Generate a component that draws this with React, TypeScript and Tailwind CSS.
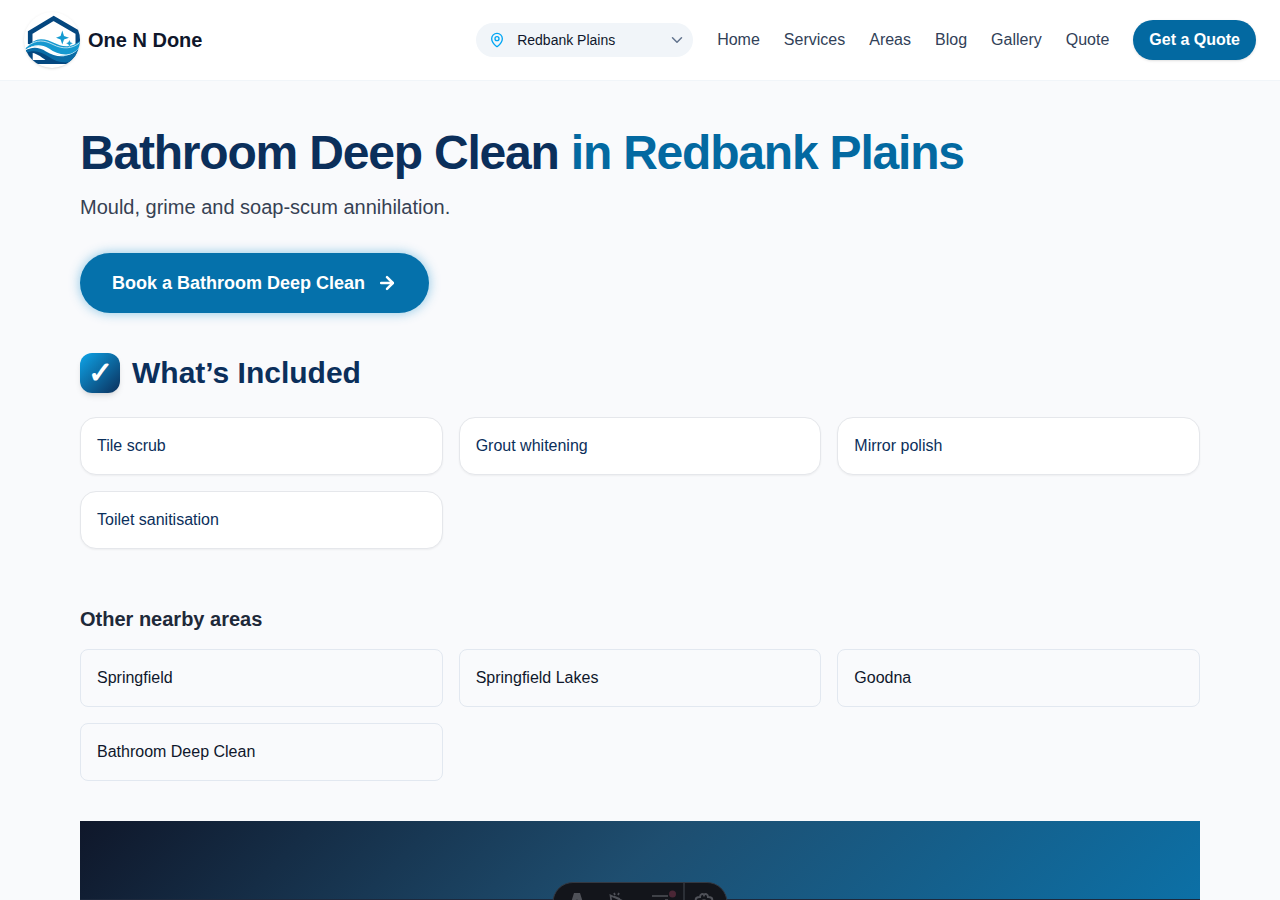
import { ArrowRight, ChevronDown, MapPin } from "lucide-react";

const navLinks = ["Home", "Services", "Areas", "Blog", "Gallery", "Quote"];
const included = ["Tile scrub", "Grout whitening", "Mirror polish", "Toilet sanitisation"];
const nearby = ["Springfield", "Springfield Lakes", "Goodna", "Bathroom Deep Clean"];
const suburbs = ["Redbank Plains", "Springfield", "Springfield Lakes", "Goodna"];

function Logo() {
  return (
    <svg viewBox="0 0 56 56" className="h-14 w-14 rounded-full bg-white shadow-sm" aria-hidden="true">
      <path d="M6.200 32V20.500L29.700 6.400L53.800 20.500V32" fill="none" stroke="#04477f" strokeWidth="4.600" />
      <path d="M2 38C8 36 14 36 20 40L34 49L54 40V52H2Z" fill="#04477f" />
      <path d="M8.700 41C13 41.500 17 45 21.500 48H8.700Z" fill="#fff" />
      <path d="M2 38.500C8 34.500 15 35 22 39.500C34 47 46 46 56 35V40L46 50C38 51.500 31 49 25 45C18 40 10 37 2 41Z" fill="#0a6ca6" />
      <path d="M1.500 36.500C7 30 12 27.200 17 27.200C27 27.200 33 34.500 43 34.300C48 34 52 32 56 29V34C51 43 42 45 34 42.800C26 40 22 34 14 34C9 34 5 35 1.500 37.500Z" fill="#1599d0" />
      <path d="M2 37.500C9 33.500 16 33 22 37C31 44 46 47.500 55 36C46 46 34 43 25 36.500C16 31 8 33.500 2 37.500Z" fill="#fff" />
      <path d="M3 34.500C13 26.500 21 28.500 29 32.500C39 37.500 48 37 56 30.500" fill="none" stroke="#fff" strokeWidth="0.700" />
      <path d="M38.300 18.500L40 23.900L45 25.700L40 27.500L38.300 32.600L36.600 27.500L32 25.700L36.600 23.900Z" fill="#159bd1" />
      <path d="M45.400 27.800L46.500 30.200L49 31.300L46.500 32.400L45.400 34.800L44.300 32.400L42 31.300L44.300 30.200Z" fill="#159bd1" stroke="#fff" strokeWidth="0.300" />
    </svg>
  );
}

function Toolbar() {
  return (
    <div className="fixed inset-x-0 bottom-0 flex h-[18px] justify-center overflow-hidden" aria-hidden="true">
      <svg width="176" height="44" viewBox="0 0 176 44" className="shrink-0">
        <rect x="1" y="0.500" width="174" height="40" rx="20" fill="#13151b" stroke="#343841" />
        <path d="M132 1V40" stroke="#343841" strokeWidth="1.500" />
        <path d="M17 27L22 11H28L33 27H28.500L25 17L21.500 27Z" fill="#4f5158" />
        <path d="M60 24L58.500 13.500L72 19.500M62 14.500L68 17M63 13L62 11M66 13L67 11" fill="none" stroke="#4f5158" strokeWidth="1.700" />
        <path d="M100 14H116M113 18H116" stroke="#4f5158" strokeWidth="1.700" />
        <circle cx="120.500" cy="12" r="3.500" fill="#4a2635" />
        <path d="M144 19C143 16 145 15 148 15C148 12 151 11 152 13C153 11 156 12 156 15C159 15 161 16 160 19M149 20A3.500 3.500 0 0 1 155 20" fill="none" stroke="#4f5158" strokeWidth="2" />
      </svg>
    </div>
  );
}

export default function App() {
  return (
    <div className="flex min-h-screen flex-col bg-[#f9fafc] font-['Liberation_Sans',Arial,sans-serif] text-base text-slate-900">
      <header className="border-b border-slate-100 bg-white">
        <div className="flex h-20 items-center justify-between px-6">
          <a href="#home" className="flex items-center gap-2 text-xl font-bold">
            <Logo />
            One N Done
          </a>
          <div className="flex items-center gap-6">
            <div className="relative flex items-center">
              <MapPin className="pointer-events-none absolute left-[13px] h-4 w-4 text-sky-500" />
              <select
                aria-label="Suburb"
                className="h-[34px] w-[217px] appearance-none rounded-full bg-slate-100 pr-8 pl-[41px] text-sm text-slate-900"
              >
                {suburbs.map((suburb) => (
                  <option key={suburb}>{suburb}</option>
                ))}
              </select>
              <ChevronDown className="pointer-events-none absolute right-[7px] h-[18px] w-[18px] text-slate-500" />
            </div>
            <nav className="flex items-center gap-6 text-slate-700">
              {navLinks.map((link) => (
                <a key={link} href={`#${link.toLowerCase()}`}>{link}</a>
              ))}
            </nav>
            <a href="#quote" className="rounded-full bg-[#0369a1] px-4 py-2 font-bold text-white shadow-sm">
              Get a Quote
            </a>
          </div>
        </div>
      </header>

      <main className="mx-auto flex w-full max-w-[1200px] grow flex-col px-10 pt-12">
        <h1 className="text-5xl font-bold tracking-tight text-[#0b2f5b]">
          Bathroom Deep Clean <span className="text-[#0369a1]">in Redbank Plains</span>
        </h1>
        <p className="mt-4 text-xl text-gray-700">Mould, grime and soap-scum annihilation.</p>
        <a
          href="#book"
          className="mt-8 flex h-[60px] items-center gap-3 self-start rounded-full bg-[#0571ab] px-8 text-lg font-bold text-white shadow-[0_0_12px_rgba(2,132,199,0.45)]"
        >
          Book a Bathroom Deep Clean
          <ArrowRight className="h-5 w-5" strokeWidth={3} />
        </a>

        <section className="mt-10">
          <h2 className="flex items-center gap-3 text-3xl font-bold text-[#0b2f5b]">
            <span className="flex h-10 w-10 items-center justify-center rounded-xl bg-[linear-gradient(135deg,#0ea5e9,#0b2f5b)] text-white shadow-md">
              ✓
            </span>
            What’s Included
          </h2>
          <ul className="mt-6 grid grid-cols-3 gap-4">
            {included.map((item) => (
              <li key={item} className="rounded-2xl border border-gray-200 bg-white p-4 text-[#0b2f5b] shadow-[0_1px_2px_rgba(0,0,0,0.05)]">
                {item}
              </li>
            ))}
          </ul>
        </section>

        <section className="mt-14">
          <h2 className="text-xl font-bold text-gray-800">Other nearby areas</h2>
          <ul className="mt-4 grid grid-cols-3 gap-4">
            {nearby.map((area) => (
              <li key={area}>
                <a href="#areas" className="block rounded-lg border border-slate-200 p-4">{area}</a>
              </li>
            ))}
          </ul>
        </section>

        <div className="mt-10 grow border-b border-slate-800 bg-[linear-gradient(135deg,#0f172a_0%,#1e4e70_50%,#0c70a6_100%)]" />
      </main>
      <Toolbar />
    </div>
  );
}
